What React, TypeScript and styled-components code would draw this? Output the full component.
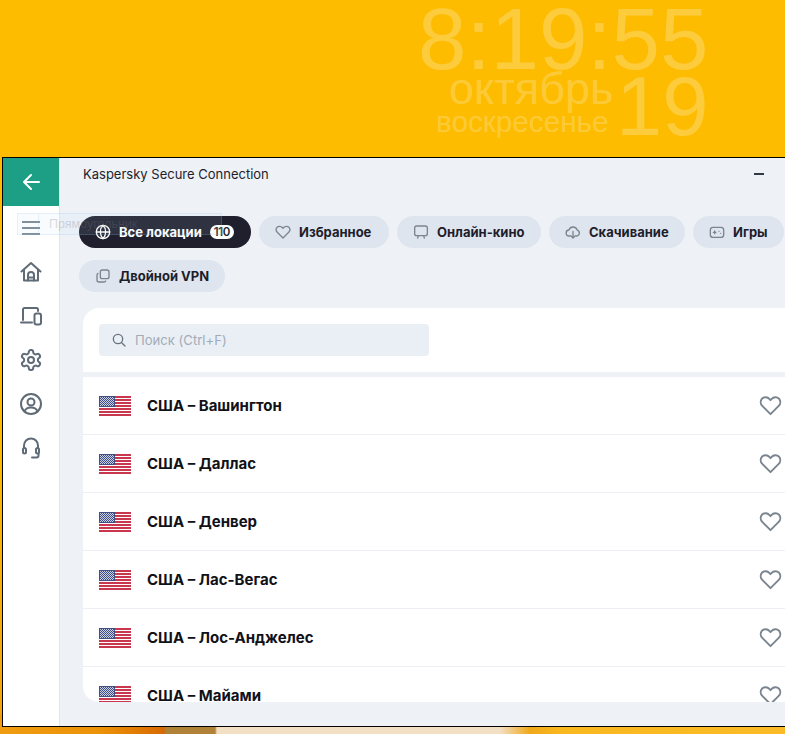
import React from "react";
import styled, { createGlobalStyle } from "styled-components";

const Global = createGlobalStyle`
  html, body { margin: 0; padding: 0; height: 100%; overflow: hidden; }
  #root { height: 100%; }
  * { box-sizing: border-box; }
`;

const Desktop = styled.div`
  position: relative;
  width: 785px;
  height: 734px;
  overflow: hidden;
  padding: 157px 0 0 2px;
  background: linear-gradient(90deg, #f09c10 0, #ec9208 100px, #da6c02 160px, #d4690a 164px, #b08238 166px, #b08238 215px, #f3dfc4 217px, #f3dfc4 500px, #f0a81a 530px, #f9b81e 560px, #fbbb28 100%);
`;

const Wallpaper = styled.div`
  position: absolute;
  inset: 0 0 20px 0;
  background: linear-gradient(180deg, #fdbc00 0, #fdbc00 420px, #f4a40e 100%);
`;

const Clock = styled.div`
  position: absolute;
  font-family: "Liberation Sans", Arial, sans-serif;
  color: rgba(255, 255, 255, 0.24);
  line-height: 1;
  white-space: nowrap;
`;
const Time = styled(Clock)`left: 418px; top: -5px; font-size: 87px;`;
const Month = styled(Clock)`left: 449px; top: 66px; font-size: 45px;`;
const Day = styled(Clock)`left: 436px; top: 107px; font-size: 29.7px;`;
const DateNum = styled(Clock)`left: 616px; top: 65px; font-size: 83px;`;

const Window = styled.div`
  position: relative;
  width: 783px;
  height: 570px;
  border: 1px solid #000;
  border-right: 0;
  background: #eef1f6;
  display: flex;
  overflow: hidden;
  font-family: Inter, "Liberation Sans", sans-serif;
`;

const Sidebar = styled.aside`
  width: 57px;
  flex: none;
  background: #fff;
  border-right: 1px solid #dfe5ee;
  display: flex;
  flex-direction: column;
`;

const BackTile = styled.div`
  height: 48px;
  background: #1d9f85;
  display: flex;
  align-items: center;
  justify-content: center;
`;

const NavList = styled.nav`
  display: flex;
  flex-direction: column;
  align-items: center;
  margin-left: -1px;
`;

const NavItem = styled.div`
  width: 44px;
  height: 44px;
  display: flex;
  align-items: center;
  justify-content: center;
  color: #5f6b76;
`;

const Burger = styled(NavItem)`
  color: #7a8690;
`;

const Main = styled.main`
  flex: 1;
  min-width: 0;
  display: flex;
  flex-direction: column;
`;

const TitleBar = styled.header`
  height: 32px;
  display: flex;
  align-items: center;
  padding: 0 0 0 23px;
  font-size: 13px;
  color: #1d1d2b;
  justify-content: space-between;
`;

const Minimize = styled.span`
  width: 10px;
  height: 2px;
  background: #2f3a45;
  margin-right: 21px;
`;

const Tabs = styled.div`
  display: flex;
  flex-wrap: wrap;
  gap: 12px 8px;
  padding: 26px 0 0 19px;
`;

const Tab = styled.div<{ $w: number; $active?: boolean }>`
  width: ${(p) => p.$w}px;
  height: 32px;
  border-radius: 16px;
  display: flex;
  align-items: center;
  gap: 8px;
  padding: 0 0 0 16px;
  font-size: 13px;
  font-weight: 700;
  white-space: nowrap;
  background: ${(p) => (p.$active ? "#1f1f2d" : "#dfe5ee")};
  color: ${(p) => (p.$active ? "#fff" : "#1d1d2b")};
  svg { color: ${(p) => (p.$active ? "#fff" : "#7b858f")}; flex: none; }
`;

const Badge = styled.span`
  background: #fff;
  color: #1f1f2d;
  font-size: 11.5px;
  font-weight: 600;
  letter-spacing: -0.4px;
  border-radius: 7px;
  height: 14px;
  padding: 0 4px;
  display: flex;
  align-items: center;
`;

const Panel = styled.section`
  margin: 16px 0 0 23px;
  width: 702px;
  height: 394px;
  background: #fff;
  border-radius: 16px 0 0 16px;
  overflow: hidden;
`;

const SearchZone = styled.div`
  height: 69px;
  padding: 16px;
  border-bottom: 5px solid #eef1f6;
`;

const SearchBox = styled.div`
  width: 330px;
  height: 32px;
  background: #eaeff6;
  border-radius: 4px;
  display: flex;
  align-items: center;
  gap: 8px;
  padding: 0 12px;
  font-size: 13.1px;
  color: #a3acb6;
  svg { color: #68737e; }
`;

const Row = styled.div`
  height: 58px;
  display: flex;
  align-items: center;
  padding: 0 3px 0 16px;
  gap: 16px;
  border-bottom: 1px solid #eceff3;
  font-size: 15px;
  font-weight: 700;
  color: #111118;
`;

const RowName = styled.span`
  flex: 1;
`;

const RowHeart = styled.span`
  display: flex;
  color: #7b858f;
`;

const Ghost = styled.div`
  position: absolute;
  left: 14px;
  top: 55px;
  width: 205px;
  height: 22px;
  display: flex;
  border: 1px solid rgba(150, 190, 230, 0.2);
  background: rgba(200, 222, 245, 0.1);
  font-family: "Liberation Sans", sans-serif;
  font-size: 12.5px;
  color: rgba(120, 120, 130, 0.28);
  line-height: 20px;
  white-space: nowrap;
  pointer-events: none;
`;

const GhostCell = styled.span`
  width: 21px;
  border-right: 1px solid rgba(150, 190, 230, 0.2);
  margin-right: 10px;
`;

const Flag = () => (
  <svg width="32" height="20" viewBox="0 0 32 20" shapeRendering="crispEdges">
    <rect width="32" height="20" fill="#fff" />
    {[0, 3, 6, 9, 12, 15, 18].map((y) => (
      <rect key={y} y={y} width="32" height={y === 18 ? 2 : 1.5} fill="#c9374f" />
    ))}
    <rect width="16" height="10.5" fill="#414f86" />
    <defs>
      <pattern id="stars" width="2" height="2" patternUnits="userSpaceOnUse">
        <rect width="1" height="1" fill="#c9cfe2" />
        <rect x="1" y="1" width="1" height="1" fill="#c9cfe2" />
      </pattern>
    </defs>
    <rect x="1" y="1" width="14" height="9" fill="url(#stars)" />
  </svg>
);

const Heart = ({ size = 23, w = 2 }: { size?: number; w?: number }) => (
  <svg width={size} height={size} viewBox="0 0 24 24" fill="none" stroke="currentColor" strokeWidth={w} strokeLinejoin="round">
    <path d="M12 21 3.400 12.400A5.600 5.600 0 0 1 3 5a5.600 5.600 0 0 1 8 .3l1 1.100 1-1.100a5.600 5.600 0 0 1 8-.3 5.600 5.600 0 0 1-.4 7.400Z" />
  </svg>
);

const I = ({ children, size = 16 }: { children: React.ReactNode; size?: number }) => (
  <svg width={size} height={size} viewBox="0 0 24 24" fill="none" stroke="currentColor" strokeWidth="2" strokeLinecap="round" strokeLinejoin="round">
    {children}
  </svg>
);

const cities = ["Вашингтон", "Даллас", "Денвер", "Лас-Вегас", "Лос-Анджелес", "Майами"];

export default function App() {
  return (
    <>
      <Global />
      <Desktop>
        <Wallpaper />
        <Time>8:19:55</Time>
        <Month>октябрь</Month>
        <Day>воскресенье</Day>
        <DateNum>19</DateNum>
        <Window>
          <Sidebar>
            <BackTile>
              <svg width="20" height="20" viewBox="0 0 20 20" fill="none" stroke="#fff" strokeWidth="2" strokeLinecap="round" strokeLinejoin="round">
                <path d="M18 10H3M10 3l-7 7 7 7" />
              </svg>
            </BackTile>
            <NavList>
              <Burger>
                <svg width="18" height="14" viewBox="0 0 18 14" fill="none" stroke="currentColor" strokeWidth="2">
                  <path d="M0 1h18M0 7h18M0 13h18" />
                </svg>
              </Burger>
              <NavItem>
                <I size={24}>
                  <path d="M2.500 11.500 12 3l9.500 8.500" />
                  <path d="M5 10v10.500h14V10" />
                  <path d="M9 20.500V15a3 3 0 0 1 6 0v5.500M9 17.500h6" />
                </I>
              </NavItem>
              <NavItem>
                <I size={24}>
                  <path d="M19 7V5.500A1.500 1.500 0 0 0 17.500 4h-12A1.500 1.500 0 0 0 4 5.500V16" />
                  <path d="M2 18.500h11" />
                  <rect x="15.500" y="9.500" width="6.500" height="11" rx="2" />
                </I>
              </NavItem>
              <NavItem>
                <I size={24}>
                  <circle cx="12" cy="12" r="3" />
                  <path d="M12.220 2h-.44a2 2 0 0 0-2 2v.18a2 2 0 0 1-1 1.730l-.43.250a2 2 0 0 1-2 0l-.15-.08a2 2 0 0 0-2.730.730l-.22.380a2 2 0 0 0 .730 2.730l.15.1a2 2 0 0 1 1 1.720v.51a2 2 0 0 1-1 1.740l-.15.09a2 2 0 0 0-.73 2.730l.22.380a2 2 0 0 0 2.730.730l.15-.08a2 2 0 0 1 2 0l.43.250a2 2 0 0 1 1 1.730V20a2 2 0 0 0 2 2h.44a2 2 0 0 0 2-2v-.18a2 2 0 0 1 1-1.730l.43-.250a2 2 0 0 1 2 0l.15.08a2 2 0 0 0 2.730-.73l.22-.39a2 2 0 0 0-.73-2.730l-.15-.08a2 2 0 0 1-1-1.740v-.5a2 2 0 0 1 1-1.740l.15-.09a2 2 0 0 0 .73-2.730l-.22-.38a2 2 0 0 0-2.730-.73l-.15.08a2 2 0 0 1-2 0l-.43-.25a2 2 0 0 1-1-1.730V4a2 2 0 0 0-2-2z" />
                </I>
              </NavItem>
              <NavItem>
                <I size={24}>
                  <circle cx="12" cy="12" r="10" />
                  <circle cx="12" cy="10" r="3.500" />
                  <path d="M5.500 19.500c.8-2.600 3-4 6.500-4s5.700 1.400 6.500 4" />
                </I>
              </NavItem>
              <NavItem>
                <I size={24}>
                  <path d="M5 12V9.500a7 7 0 0 1 14 0V12" />
                  <rect x="4" y="12" width="3" height="5.500" rx="1.500" />
                  <rect x="17" y="12" width="3" height="5.500" rx="1.500" />
                  <path d="M19.500 17.500v2a2 2 0 0 1-2 2H13" />
                </I>
              </NavItem>
            </NavList>
          </Sidebar>
          <Main>
            <TitleBar>
              <span>Kaspersky Secure Connection</span>
              <Minimize />
            </TitleBar>
            <Tabs>
              <Tab $active $w={172}>
                <I>
                  <circle cx="12" cy="12" r="10" />
                  <path d="M2 12h20M12 2c3 3 4 6.500 4 10s-1 7-4 10c-3-3-4-6.500-4-10s1-7 4-10z" />
                </I>
                Все локации
                <Badge>110</Badge>
              </Tab>
              <Tab $w={130}>
                <Heart size={16} />
                Избранное
              </Tab>
              <Tab $w={144}>
                <I>
                  <rect x="2.500" y="3" width="19" height="14.500" rx="3" />
                  <path d="M7 21l1-3.500M17 21l-1-3.500" />
                </I>
                Онлайн-кино
              </Tab>
              <Tab $w={136}>
                <I>
                  <path d="M7 18H6.500a4.500 4.500 0 0 1-.6-9A6.500 6.500 0 0 1 18.300 9.200 4.500 4.500 0 0 1 17.500 18H17" />
                  <path d="M12 11v10M8.500 17.500 12 21l3.500-3.500" />
                </I>
                Скачивание
              </Tab>
              <Tab $w={91}>
                <I>
                  <rect x="2" y="5" width="20" height="15" rx="4" />
                  <path d="M6.500 12.500h4M8.500 10.500v4M15 11h.01M17.500 14h.01" />
                </I>
                Игры
              </Tab>
              <Tab $w={146}>
                <I>
                  <rect x="8" y="3" width="13" height="13" rx="3" />
                  <path d="M4.500 8A2.500 2.500 0 0 0 3 10.500V18a3 3 0 0 0 3 3h7.500a2.500 2.500 0 0 0 2.500-1.500" />
                </I>
                Двойной VPN
              </Tab>
            </Tabs>
            <Panel>
              <SearchZone>
                <SearchBox>
                  <I>
                    <circle cx="10.500" cy="10.500" r="7" />
                    <path d="m16 16 5 5" />
                  </I>
                  Поиск (Ctrl+F)
                </SearchBox>
              </SearchZone>
              {cities.map((c) => (
                <Row key={c}>
                  <Flag />
                  <RowName>США – {c}</RowName>
                  <RowHeart>
                    <Heart />
                  </RowHeart>
                </Row>
              ))}
            </Panel>
          </Main>
          <Ghost>
            <GhostCell />
            Прямоугольник
          </Ghost>
        </Window>
      </Desktop>
    </>
  );
}
